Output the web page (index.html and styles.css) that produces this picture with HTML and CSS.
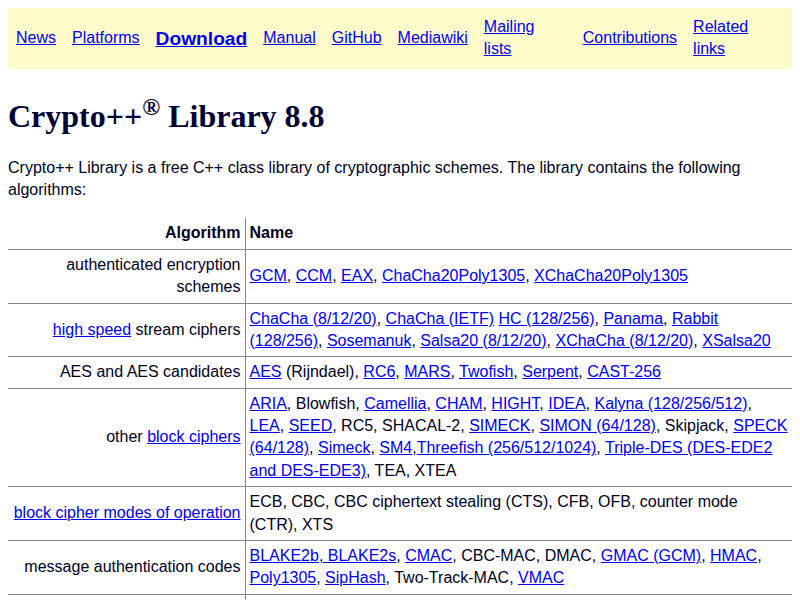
FILE: index.html
```html
<!DOCTYPE html>
<html lang="en">
<head>
<meta charset="utf-8">
<title>Crypto++ Library 8.8</title>
<link rel="stylesheet" href="styles.css">
</head>
<body>
<nav class="topnav">
  <a class="nav-item" href="#">News</a>
  <a class="nav-item" href="#">Platforms</a>
  <a class="nav-item nav-strong" href="#">Download</a>
  <a class="nav-item" href="#">Manual</a>
  <a class="nav-item" href="#">GitHub</a>
  <a class="nav-item" href="#">Mediawiki</a>
  <span class="nav-cell nav-mail"><a href="#">Mailing lists</a></span>
  <a class="nav-item" href="#">Contributions</a>
  <span class="nav-cell nav-related"><a href="#">Related links</a></span>
</nav>

<h1 class="title">Crypto++<sup>®</sup> Library 8.8</h1>

<p class="intro">Crypto++ Library is a free C++ class library of cryptographic schemes. The library contains the following algorithms:</p>

<table class="algos">
  <colgroup><col class="col-alg"><col class="col-name"></colgroup>
  <thead>
    <tr><th class="alg">Algorithm</th><th class="name">Name</th></tr>
  </thead>
  <tbody>
    <tr>
      <td class="alg">authenticated encryption schemes</td>
      <td class="name"><a href="#">GCM</a>, <a href="#">CCM</a>, <a href="#">EAX</a>, <a href="#">ChaCha20Poly1305</a>, <a href="#">XChaCha20Poly1305</a></td>
    </tr>
    <tr>
      <td class="alg"><a href="#">high speed</a> stream ciphers</td>
      <td class="name"><a href="#">ChaCha (8/12/20)</a>, <a href="#">ChaCha (IETF)</a> <a href="#">HC (128/256)</a>, <a href="#">Panama</a>, <a href="#">Rabbit (128/256)</a>, <a href="#">Sosemanuk</a>, <a href="#">Salsa20 (8/12/20)</a>, <a href="#">XChaCha (8/12/20)</a>, <a href="#">XSalsa20</a></td>
    </tr>
    <tr>
      <td class="alg">AES and AES candidates</td>
      <td class="name"><a href="#">AES</a> (Rijndael), <a href="#">RC6</a>, <a href="#">MARS</a>, <a href="#">Twofish</a>, <a href="#">Serpent</a>, <a href="#">CAST-256</a></td>
    </tr>
    <tr>
      <td class="alg">other <a href="#">block ciphers</a></td>
      <td class="name"><a href="#">ARIA</a>, Blowfish, <a href="#">Camellia</a>, <a href="#">CHAM</a>, <a href="#">HIGHT</a>, <a href="#">IDEA</a>, <a href="#">Kalyna (128/256/512)</a>, <a href="#">LEA</a>, <a href="#">SEED</a>, RC5, SHACAL-2, <a href="#">SIMECK</a>, <a href="#">SIMON (64/128)</a>, Skipjack, <a href="#">SPECK (64/128)</a>, <a href="#">Simeck</a>, <a href="#">SM4</a>,<a href="#">Threefish (256/512/1024)</a>, <a href="#">Triple-DES (DES-EDE2 and DES-EDE3)</a>, TEA, XTEA</td>
    </tr>
    <tr>
      <td class="alg"><a href="#">block cipher modes of operation</a></td>
      <td class="name">ECB, CBC, CBC ciphertext stealing (CTS), CFB, OFB, counter mode (CTR), XTS</td>
    </tr>
    <tr>
      <td class="alg">message authentication codes</td>
      <td class="name"><a href="#">BLAKE2b, BLAKE2s</a>, <a href="#">CMAC</a>, CBC-MAC, DMAC, <a href="#">GMAC (GCM)</a>, <a href="#">HMAC</a>, <a href="#">Poly1305</a>, <a href="#">SipHash</a>, Two-Track-MAC, <a href="#">VMAC</a></td>
    </tr>
    <tr>
      <td class="alg">hash functions</td>
      <td class="name"><a href="#">BLAKE2b, BLAKE2s</a>, <a href="#">Keccack (F1600)</a>, <a href="#">LSH (256/512)</a>, SHA-1, SHA-2, <a href="#">SHA-3</a>, <a href="#">SHAKE (128/256)</a>, SipHash, <a href="#">SM3</a>, Tiger, RIPEMD (128/160/256/320), SHA-3</td>
    </tr>
  </tbody>
</table>
</body>
</html>
```

FILE: styles.css
```css
html, body {
  background: #ffffff;
}
body {
  margin: 8px;
  font-family: "Liberation Sans", Arial, sans-serif;
  font-size: 16px;
  line-height: 1.4;
  color: #000022;
}
a {
  color: #0000ee;
}

.topnav {
  display: flex;
  align-items: center;
  background: #fffccc;
}
.nav-item,
.nav-cell {
  flex: none;
  padding: 8px;
}
.nav-strong {
  font-weight: bold;
  font-size: 1.2em;
  line-height: 1.2;
}
.nav-mail {
  box-sizing: border-box;
  width: 99px;
  padding-right: 30px;
}
.nav-related {
  box-sizing: border-box;
  width: 108px;
  padding-right: 36px;
}

.title {
  font-family: "Liberation Serif", "Times New Roman", serif;
  font-size: 32px;
  line-height: 1.15;
  font-weight: bold;
  color: #000033;
  margin: 29px 0 22px;
}
.title sup {
  font-size: 0.75em;
  line-height: 0;
}

.intro {
  margin: 0 0 17px;
}

.algos {
  width: 100%;
  border-collapse: collapse;
  table-layout: fixed;
}
.col-alg {
  width: 237px;
}
.algos th,
.algos td {
  padding: 4px;
  vertical-align: middle;
}
.algos th {
  font-weight: bold;
  text-align: left;
}
.algos .alg {
  text-align: right;
  border-right: 1px solid #888888;
}
.algos tbody tr {
  border-top: 1px solid #888888;
}
```
